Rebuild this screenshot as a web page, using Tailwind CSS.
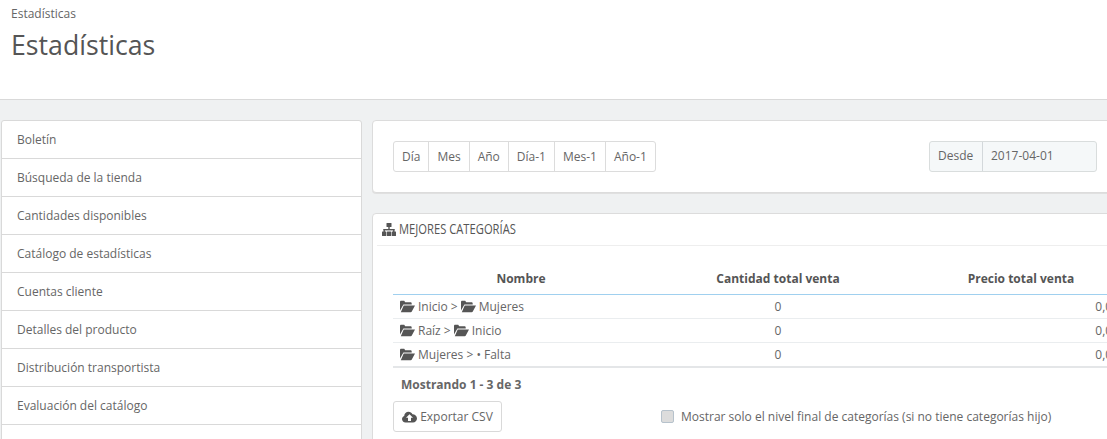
<!DOCTYPE html>
<html lang="es">
<head>
  <meta charset="UTF-8">
  <title>Estadísticas</title>
  <script src="https://cdn.jsdelivr.net/npm/@tailwindcss/browser@4"></script>
</head>
<body class="h-[439px] overflow-hidden bg-[#eff1f2] font-['Open_Sans',sans-serif] text-xs text-[#666]">
  <header class="h-[100px] border-b border-[#d9d9d9] bg-white pl-[11px] pt-[6px]">
    <div class="text-xs leading-[15px]">Estadísticas</div>
    <h1 class="mt-[6px] text-[26.7px] leading-[36px] text-[#555]">Estadísticas</h1>
  </header>

  <main class="flex w-[1160px] items-start pl-[1px] pt-5">
    <nav class="w-[361px] shrink-0 overflow-hidden rounded-[3px] border border-[#d9d9d9] bg-white">
      <a class="block h-[38px] border-b border-[#d9d9d9] pl-[15px] leading-[37px]">Boletín</a>
      <a class="block h-[38px] border-b border-[#d9d9d9] pl-[15px] leading-[37px]">Búsqueda de la tienda</a>
      <a class="block h-[38px] border-b border-[#d9d9d9] pl-[15px] leading-[37px]">Cantidades disponibles</a>
      <a class="block h-[38px] border-b border-[#d9d9d9] pl-[15px] leading-[37px]">Catálogo de estadísticas</a>
      <a class="block h-[38px] border-b border-[#d9d9d9] pl-[15px] leading-[37px]">Cuentas cliente</a>
      <a class="block h-[38px] border-b border-[#d9d9d9] pl-[15px] leading-[37px]">Detalles del producto</a>
      <a class="block h-[38px] border-b border-[#d9d9d9] pl-[15px] leading-[37px]">Distribución transportista</a>
      <a class="block h-[38px] border-b border-[#d9d9d9] pl-[15px] leading-[37px]">Evaluación del catálogo</a>
      <a class="block h-[38px]"></a>
    </nav>

    <div class="ml-[10px] w-[770px] shrink-0">
      <section class="flex h-[73px] items-center justify-between rounded-[4px] border border-[#dcdcdc] bg-white pl-5 pr-[44px] shadow-[0_1px_0_#e0e0e0]">
        <div class="flex h-[31px] rounded-[3px] border border-[#dcdcdc] leading-[29px]">
          <span class="border-r border-[#dcdcdc] px-2">Día</span>
          <span class="border-r border-[#dcdcdc] px-2">Mes</span>
          <span class="border-r border-[#dcdcdc] px-2">Año</span>
          <span class="border-r border-[#dcdcdc] px-2">Día-1</span>
          <span class="border-r border-[#dcdcdc] px-2">Mes-1</span>
          <span class="px-2">Año-1</span>
        </div>
        <div class="flex h-[31px] w-[168px] rounded-[3px] border border-[#d9dddd] bg-[#f5f8f9] leading-[27px]">
          <span class="w-[53px] border-r border-[#d3d8db] pl-2">Desde</span>
          <span class="pl-2">2017-04-01</span>
        </div>
      </section>

      <section class="mt-[20px] h-[300px] rounded-[4px] border border-[#dcdcdc] bg-white pl-1">
        <h2 class="flex h-[32px] items-center gap-[3px] border-b border-[#eeeeee] pl-[5px] text-[14px] text-[#555]">
          <svg class="h-[13px] w-[14px] shrink-0" viewBox="0 0 14 13" fill="#555">
            <rect x="4.500" y="0" width="5" height="4" rx=".5" />
            <rect x="6.300" y="4" width="1.400" height="3" />
            <rect x="1.500" y="6" width="11" height="1.400" />
            <rect x="1.500" y="6" width="1.400" height="3" />
            <rect x="11.100" y="6" width="1.400" height="3" />
            <rect x="0" y="8.500" width="4.300" height="4.500" rx=".5" />
            <rect x="4.850" y="8.500" width="4.300" height="4.500" rx=".5" />
            <rect x="9.700" y="8.500" width="4.300" height="4.500" rx=".5" />
          </svg>
          <span class="origin-left scale-x-[0.8] whitespace-nowrap">MEJORES CATEGORÍAS</span>
        </h2>

        <table class="ml-[16px] mt-[16px] w-[742px] table-fixed border-collapse">
          <thead>
            <tr class="h-[32px] border-b border-[#a0d0ef] font-bold text-[#555]">
              <th class="w-[256px] pt-[2px]">Nombre</th>
              <th class="w-[258px] pt-[2px]">Cantidad total venta</th>
              <th class="pt-[2px]">Precio total venta</th>
            </tr>
          </thead>
          <tbody>
            <tr class="h-6 border-b border-[#eaedef]">
              <td class="pl-[7px] pt-[1px]">
                <span class="flex items-center gap-[3px]">
                  <svg class="h-[13px] w-[15px]" viewBox="0 0 15 12" fill="#555"><path d="M0 10V1.5C0 .8.5.3 1.2.3h3l1 1.4h5.3c.7 0 1.2.5 1.2 1.2v1H3.4L0 10zM3.7 5H15l-3.2 6c-.2.4-.6.7-1.100.7H.8L3.700 5z" /></svg>
                  Inicio &gt;
                  <svg class="h-[13px] w-[15px]" viewBox="0 0 15 12" fill="#555"><path d="M0 10V1.5C0 .8.5.3 1.2.3h3l1 1.4h5.3c.7 0 1.2.5 1.2 1.2v1H3.4L0 10zM3.7 5H15l-3.2 6c-.2.4-.6.7-1.100.7H.8L3.700 5z" /></svg>
                  Mujeres
                </span>
              </td>
              <td class="pt-[1px] text-center">0</td>
              <td class="pr-[6px] pt-[1px] text-right">0,00 €</td>
            </tr>
            <tr class="h-6 border-b border-[#eaedef]">
              <td class="pl-[7px] pt-[1px]">
                <span class="flex items-center gap-[3px]">
                  <svg class="h-[13px] w-[15px]" viewBox="0 0 15 12" fill="#555"><path d="M0 10V1.5C0 .8.5.3 1.2.3h3l1 1.4h5.3c.7 0 1.2.5 1.2 1.2v1H3.4L0 10zM3.7 5H15l-3.2 6c-.2.4-.6.7-1.100.7H.8L3.700 5z" /></svg>
                  Raíz &gt;
                  <svg class="h-[13px] w-[15px]" viewBox="0 0 15 12" fill="#555"><path d="M0 10V1.5C0 .8.5.3 1.2.3h3l1 1.4h5.3c.7 0 1.2.5 1.2 1.2v1H3.4L0 10zM3.7 5H15l-3.2 6c-.2.4-.6.7-1.100.7H.8L3.700 5z" /></svg>
                  Inicio
                </span>
              </td>
              <td class="pt-[1px] text-center">0</td>
              <td class="pr-[6px] pt-[1px] text-right">0,00 €</td>
            </tr>
            <tr class="h-[25px] border-b-2 border-[#e4e6e8]">
              <td class="pl-[7px] pt-[1px]">
                <span class="flex items-center gap-[3px]">
                  <svg class="h-[13px] w-[15px]" viewBox="0 0 15 12" fill="#555"><path d="M0 10V1.5C0 .8.5.3 1.2.3h3l1 1.4h5.3c.7 0 1.2.5 1.2 1.2v1H3.4L0 10zM3.7 5H15l-3.2 6c-.2.4-.6.7-1.100.7H.8L3.700 5z" /></svg>
                  Mujeres &gt; • Falta
                </span>
              </td>
              <td class="pt-[1px] text-center">0</td>
              <td class="pr-[6px] pt-[1px] text-right">0,00 €</td>
            </tr>
          </tbody>
        </table>

        <p class="ml-[24px] mt-[8px] font-bold leading-[18px]">Mostrando 1 - 3 de 3</p>

        <div class="ml-[16px] mt-[7px] flex items-center">
          <button class="flex h-[31px] w-[109px] items-center justify-center gap-[3px] rounded-[3px] border border-[#d9d9d9]">
            <svg class="h-3 w-[15px]" viewBox="0 0 15 12">
              <path fill="#555" d="M3.500 11.500C1.500 11.500 0 10 0 8.100 0 6.600.9 5.400 2.200 4.900 2.300 2.600 4.200.7 6.500.7c1.800 0 3.300 1 4 2.600C12.900 3.300 15 5.200 15 7.500c0 2.200-1.800 4-4 4H3.500z" />
              <path fill="#fff" d="M7.500 3.200 11 6.700H9v3.200H6V6.700H4z" />
            </svg>
            Exportar CSV
          </button>
          <span class="ml-[159px] h-[13px] w-[13px] rounded-[2px] border border-[#b6c2cc] bg-[#dcdcdc]"></span>
          <label class="ml-[7px]">Mostrar solo el nivel final de categorías (si no tiene categorías hijo)</label>
        </div>
      </section>
    </div>
  </main>
</body>
</html>
